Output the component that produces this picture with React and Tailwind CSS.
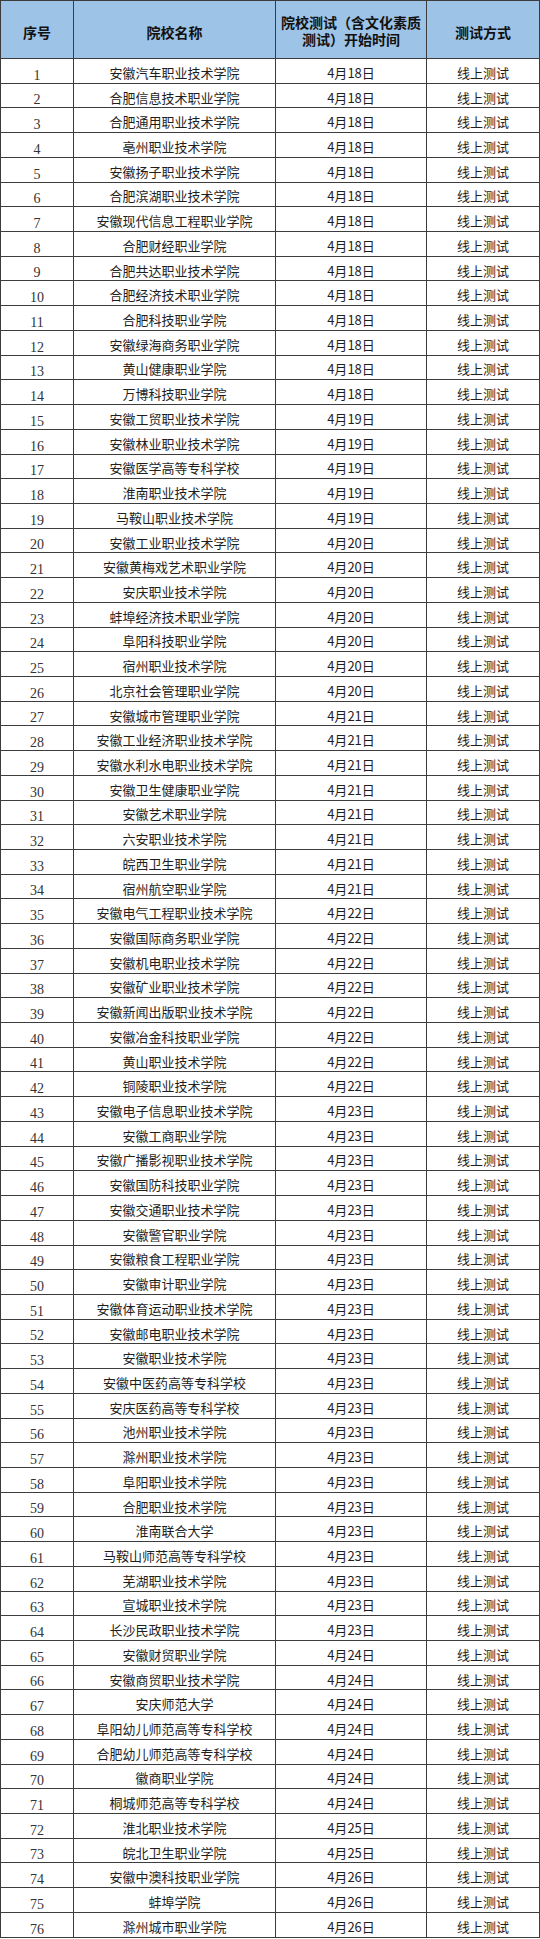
import React from "react";

const rows = [
  ["安徽汽车职业技术学院", 18],
  ["合肥信息技术职业学院", 18],
  ["合肥通用职业技术学院", 18],
  ["亳州职业技术学院", 18],
  ["安徽扬子职业技术学院", 18],
  ["合肥滨湖职业技术学院", 18],
  ["安徽现代信息工程职业学院", 18],
  ["合肥财经职业学院", 18],
  ["合肥共达职业技术学院", 18],
  ["合肥经济技术职业学院", 18],
  ["合肥科技职业学院", 18],
  ["安徽绿海商务职业学院", 18],
  ["黄山健康职业学院", 18],
  ["万博科技职业学院", 18],
  ["安徽工贸职业技术学院", 19],
  ["安徽林业职业技术学院", 19],
  ["安徽医学高等专科学校", 19],
  ["淮南职业技术学院", 19],
  ["马鞍山职业技术学院", 19],
  ["安徽工业职业技术学院", 20],
  ["安徽黄梅戏艺术职业学院", 20],
  ["安庆职业技术学院", 20],
  ["蚌埠经济技术职业学院", 20],
  ["阜阳科技职业学院", 20],
  ["宿州职业技术学院", 20],
  ["北京社会管理职业学院", 20],
  ["安徽城市管理职业学院", 21],
  ["安徽工业经济职业技术学院", 21],
  ["安徽水利水电职业技术学院", 21],
  ["安徽卫生健康职业学院", 21],
  ["安徽艺术职业学院", 21],
  ["六安职业技术学院", 21],
  ["皖西卫生职业学院", 21],
  ["宿州航空职业学院", 21],
  ["安徽电气工程职业技术学院", 22],
  ["安徽国际商务职业学院", 22],
  ["安徽机电职业技术学院", 22],
  ["安徽矿业职业技术学院", 22],
  ["安徽新闻出版职业技术学院", 22],
  ["安徽冶金科技职业学院", 22],
  ["黄山职业技术学院", 22],
  ["铜陵职业技术学院", 22],
  ["安徽电子信息职业技术学院", 23],
  ["安徽工商职业学院", 23],
  ["安徽广播影视职业技术学院", 23],
  ["安徽国防科技职业学院", 23],
  ["安徽交通职业技术学院", 23],
  ["安徽警官职业学院", 23],
  ["安徽粮食工程职业学院", 23],
  ["安徽审计职业学院", 23],
  ["安徽体育运动职业技术学院", 23],
  ["安徽邮电职业技术学院", 23],
  ["安徽职业技术学院", 23],
  ["安徽中医药高等专科学校", 23],
  ["安庆医药高等专科学校", 23],
  ["池州职业技术学院", 23],
  ["滁州职业技术学院", 23],
  ["阜阳职业技术学院", 23],
  ["合肥职业技术学院", 23],
  ["淮南联合大学", 23],
  ["马鞍山师范高等专科学校", 23],
  ["芜湖职业技术学院", 23],
  ["宣城职业技术学院", 23],
  ["长沙民政职业技术学院", 23],
  ["安徽财贸职业学院", 24],
  ["安徽商贸职业技术学院", 24],
  ["安庆师范大学", 24],
  ["阜阳幼儿师范高等专科学校", 24],
  ["合肥幼儿师范高等专科学校", 24],
  ["徽商职业学院", 24],
  ["桐城师范高等专科学校", 24],
  ["淮北职业技术学院", 25],
  ["皖北卫生职业学院", 25],
  ["安徽中澳科技职业学院", 26],
  ["蚌埠学院", 26],
  ["滁州城市职业学院", 26],
];

const cell = "border-r border-b border-[#3c3c3c] flex justify-center";

export default function App() {
  return (
    <div className="w-[540px] bg-white font-['Noto_Sans_CJK_SC',sans-serif] text-[#1e1e1e]">
      <div className="border-t border-l border-[#3c3c3c]">
        <div className="grid grid-cols-[73px_202px_151px_113px] h-[58px] bg-[#9dc3e6] text-[14px] font-bold leading-[17px] text-[#111]">
          <div className={`${cell} items-center pt-[6px]`}>序号</div>
          <div className={`${cell} items-center pt-[6px]`}>院校名称</div>
          <div className={`${cell} flex-col items-center justify-center pt-[3px] text-center`}>
            <span>院校测试（含文化素质</span>
            <span>测试）开始时间</span>
          </div>
          <div className={`${cell} items-center pt-[6px]`}>测试方式</div>
        </div>
        {rows.map(([name, day], i) => (
          <div key={i} className="grid grid-cols-[73px_202px_151px_113px] h-[24.72px] text-[13px]">
            <div className={`${cell} items-end font-['Liberation_Serif',serif] text-[14px] leading-[14px] text-[#333]`}>
              {i + 1}
            </div>
            <div className={`${cell} items-center pt-[3px] leading-none whitespace-nowrap`}>{name}</div>
            <div className={`${cell} items-center pt-[3px] leading-none`}>4月{day}日</div>
            <div className={`${cell} items-center pt-[3px] leading-none`}>线上测试</div>
          </div>
        ))}
      </div>
    </div>
  );
}
